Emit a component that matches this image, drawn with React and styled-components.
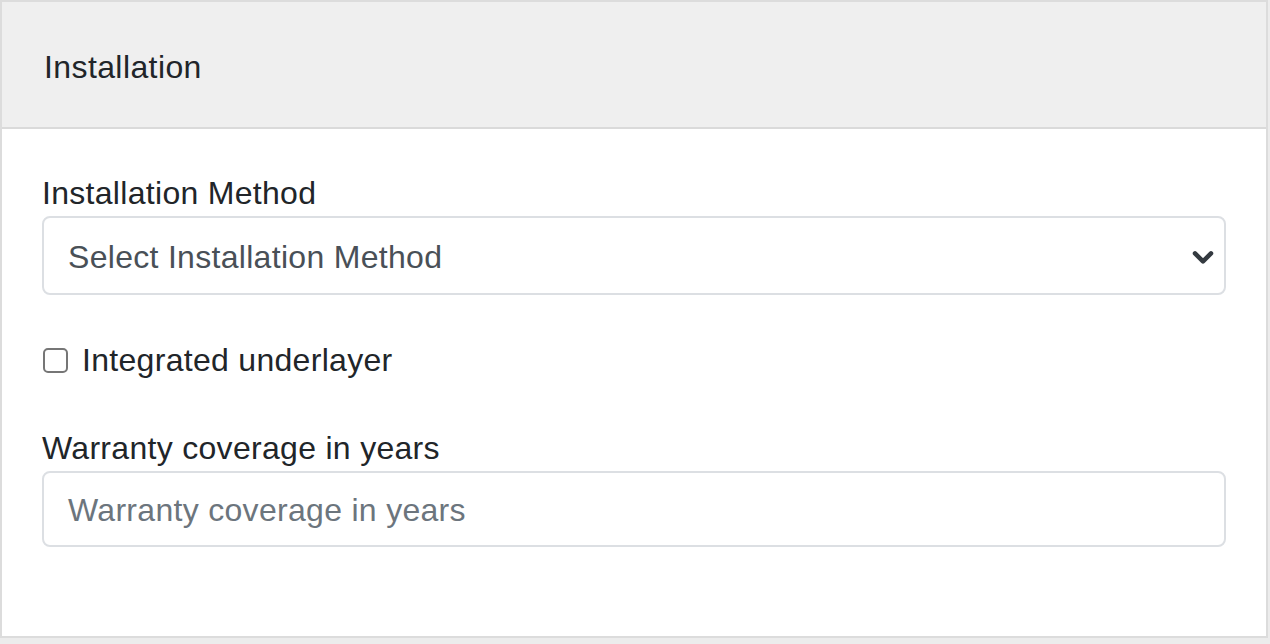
import React from "react";
import styled, { createGlobalStyle } from "styled-components";

const Global = createGlobalStyle`
  html, body { margin: 0; padding: 0; background: #ececec; }
  body {
    font-family: "Liberation Sans", Arial, Helvetica, sans-serif;
    color: #212529;
    -webkit-font-smoothing: antialiased;
  }
  * { box-sizing: border-box; }
`;

const Page = styled.div`
  width: 1270px;
  height: 644px;
  background: #ececec;
  display: flex;
  flex-direction: column;
  align-items: flex-start;
`;

const Card = styled.div`
  width: 1268px;
  height: 638px;
  background: #fff;
  border: 2px solid #dcdcdc;
  display: flex;
  flex-direction: column;
`;

const CardHeader = styled.div`
  background: #efefef;
  border-bottom: 2px solid #dadada;
  height: 127px;
  padding: 5px 40px 0 42px;
  display: flex;
  align-items: center;
  font-size: 32px;
  letter-spacing: 0.4px;
  color: #212529;
`;

const CardBody = styled.div`
  padding: 41px 40px 0 40px;
  display: flex;
  flex-direction: column;
`;

const FormGroup = styled.div`
  display: flex;
  flex-direction: column;
  margin-bottom: ${(p) => p.$mb || 0}px;
`;

const Label = styled.label`
  font-size: 32px;
  line-height: 46px;
  color: #212529;
  letter-spacing: 0.3px;
`;

const SelectBox = styled.div`
  position: relative;
  height: 79px;
  border: 2px solid #dcdfe3;
  border-radius: 8px;
  display: flex;
  align-items: center;
  padding: 3px 24px 0 24px;
  font-size: 32px;
  color: #495057;
  letter-spacing: 0.3px;
`;

const Chevron = styled.svg`
  position: absolute;
  right: 10px;
  top: 50%;
  transform: translateY(-40%);
`;

const CheckRow = styled.label`
  display: flex;
  align-items: center;
  gap: 14px;
  height: 48px;
  font-size: 32px;
  color: #212529;
  letter-spacing: 0.3px;
`;

const CheckBox = styled.span`
  width: 25px;
  height: 25px;
  border: 2px solid #767676;
  border-radius: 5px;
  background: #fff;
  margin-left: 1px;
`;

const Input = styled.div`
  height: 76px;
  border: 2px solid #dcdfe3;
  border-radius: 8px;
  display: flex;
  align-items: center;
  padding: 3px 24px 0 24px;
  font-size: 32px;
  color: #6c757d;
  letter-spacing: 0.3px;
`;

export default function App() {
  return (
    <Page>
      <Global />
      <Card>
        <CardHeader>Installation</CardHeader>
        <CardBody>
          <FormGroup $mb={41}>
            <Label>Installation Method</Label>
            <SelectBox>
              Select Installation Method
              <Chevron width="22" height="14" viewBox="0 0 22 14">
                <path
                  d="M3 3 L11 11 L19 3"
                  fill="none"
                  stroke="#343a40"
                  strokeWidth="4.5"
                  strokeLinecap="round"
                  strokeLinejoin="round"
                />
              </Chevron>
            </SelectBox>
          </FormGroup>
          <FormGroup $mb={41}>
            <CheckRow>
              <CheckBox />
              Integrated underlayer
            </CheckRow>
          </FormGroup>
          <FormGroup>
            <Label>Warranty coverage in years</Label>
            <Input>Warranty coverage in years</Input>
          </FormGroup>
        </CardBody>
      </Card>
    </Page>
  );
}
